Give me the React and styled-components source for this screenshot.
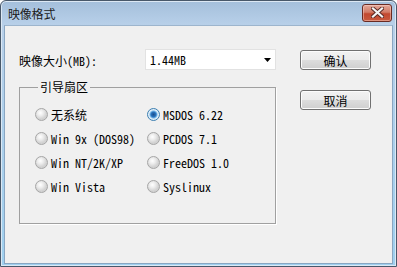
import React from "react";
import styled, { createGlobalStyle } from "styled-components";

const GlobalStyle = createGlobalStyle`
  html, body {
    margin: 0;
    padding: 0;
    background: #ffffff;
  }
  body {
    width: 397px;
    height: 267px;
    overflow: hidden;
  }
`;

const mono = `"Noto Sans Mono CJK SC", "Liberation Mono", "Noto Sans CJK SC", monospace`;
const ui = `"Noto Sans CJK SC", "Noto Sans", sans-serif`;

const Window = styled.div`
  box-sizing: border-box;
  width: 397px;
  height: 267px;
  display: flex;
  flex-direction: column;
  border: 1px solid #48586a;
  border-radius: 6px 6px 0 0;
  background: linear-gradient(#a4bfdb, #b8d0e9 24px, #9fd0ef);
  box-shadow: inset 0 0 0 1px #dce8f4;
`;

const TitleBar = styled.div`
  height: 24px;
  display: flex;
  align-items: center;
  justify-content: space-between;
  padding: 0 4px 0 7px;
`;

const Title = styled.span`
  font-family: ${ui};
  font-size: 12px;
  color: #1b1b1b;
  letter-spacing: -0.2px;
`;

const CloseButton = styled.div`
  box-sizing: border-box;
  width: 30px;
  height: 18px;
  margin-top: -1px;
  display: flex;
  align-items: center;
  justify-content: center;
  border: 1px solid #6a2b23;
  border-radius: 3px;
  background: linear-gradient(#e3a89a, #d27b66 45%, #c2482f 55%, #c85a3e);
  box-shadow: inset 0 0 0 1px rgba(255, 220, 210, 0.45);
`;

const Frame = styled.div`
  flex: 1;
  display: flex;
  padding: 0 3px 2px 3px;
`;

const Client = styled.div`
  flex: 1;
  display: flex;
  gap: 24px;
  padding: 23px 0 0 14px;
  background: #f0f0f0;
  border: 1px solid #89a6c2;
  border-top-color: #9db5cd;
`;

const LeftCol = styled.div`
  width: 257px;
  display: flex;
  flex-direction: column;
`;

const SizeRow = styled.div`
  display: grid;
  grid-template-columns: 126px 131px;
  align-items: center;
  height: 21px;
`;

const Label = styled.span`
  font-family: ${mono};
  font-size: 12px;
  color: #000;
  margin-top: 1px;
`;

const Combo = styled.div`
  box-sizing: border-box;
  height: 21px;
  display: flex;
  align-items: center;
  justify-content: space-between;
  padding: 0 4px 0 4px;
  background: #ffffff;
  border: 1px solid #e2e2e2;
  font-family: ${mono};
  font-size: 12px;
  color: #000;
`;

const Group = styled.fieldset`
  margin: 9px 0 0 0;
  padding: 7px 0 25px 15px;
  border: 1px solid #a0a0a0;
  box-shadow: 1px 1px 0 #ffffff;
  display: grid;
  grid-template-columns: 112px 1fr;
  grid-auto-rows: 24px;
`;

const Legend = styled.legend`
  margin-left: 3px;
  padding: 0 2px;
  font-family: ${ui};
  font-size: 12px;
  line-height: 16px;
  color: #000;
`;

const Option = styled.div`
  display: flex;
  align-items: center;
  gap: 3px;
  font-family: ${mono};
  font-size: 12px;
  color: #000;
`;

const Dot = styled.span`
  box-sizing: border-box;
  width: 13px;
  height: 13px;
  flex: none;
  border-radius: 50%;
  border: 1px solid ${(p) => (p.$checked ? "#3c7fb1" : "#a6a6a6")};
  background: ${(p) =>
    p.$checked
      ? "radial-gradient(circle, #1c4f8c 0, #2a74c0 2.5px, #7fbbe8 3.6px, #e6f2fb 4.6px, #d8e6f2 6px)"
      : "radial-gradient(circle at 40% 35%, #ffffff 0, #ececec 3px, #d2d2d2 6px)"};
`;

const RightCol = styled.div`
  display: flex;
  flex-direction: column;
  gap: 20px;
  padding-top: 1px;
`;

const Button = styled.div`
  box-sizing: border-box;
  width: 71px;
  height: 20px;
  display: flex;
  align-items: center;
  justify-content: center;
  border: 1px solid #707070;
  border-radius: 3px;
  background: linear-gradient(#f2f2f2, #ebebeb 50%, #dddddd 50%, #cfcfcf);
  box-shadow: inset 0 0 0 1px #fcfcfc;
  font-family: ${mono};
  font-size: 12px;
  color: #000;
`;

const leftOptions = ["无系统", "Win 9x (DOS98)", "Win NT/2K/XP", "Win Vista"];
const rightOptions = ["MSDOS 6.22", "PCDOS 7.1", "FreeDOS 1.0", "Syslinux"];

const App = () => {
  return (
    <>
      <GlobalStyle />
      <Window>
        <TitleBar>
          <Title>映像格式</Title>
          <CloseButton>
            <svg width="13" height="11" viewBox="0 0 13 11">
              <path
                d="M2 1.5 L11 9.5 M11 1.5 L2 9.5"
                stroke="#5a2a24"
                strokeWidth="4"
                strokeLinecap="square"
              />
              <path
                d="M2 1.5 L11 9.5 M11 1.5 L2 9.5"
                stroke="#f4f4f4"
                strokeWidth="2.2"
                strokeLinecap="square"
              />
            </svg>
          </CloseButton>
        </TitleBar>
        <Frame>
          <Client>
            <LeftCol>
              <SizeRow>
                <Label>映像大小(MB):</Label>
                <Combo>
                  <span>1.44MB</span>
                  <svg width="7" height="4" viewBox="0 0 7 4">
                    <path d="M0 0 H7 L3.5 4 Z" fill="#000" />
                  </svg>
                </Combo>
              </SizeRow>
              <Group>
                <Legend>引导扇区</Legend>
                {leftOptions.map((l, i) => (
                  <React.Fragment key={l}>
                    <Option>
                      <Dot />
                      {l}
                    </Option>
                    <Option>
                      <Dot $checked={i === 0} />
                      {rightOptions[i]}
                    </Option>
                  </React.Fragment>
                ))}
              </Group>
            </LeftCol>
            <RightCol>
              <Button>确认</Button>
              <Button>取消</Button>
            </RightCol>
          </Client>
        </Frame>
      </Window>
    </>
  );
};

export default App;
